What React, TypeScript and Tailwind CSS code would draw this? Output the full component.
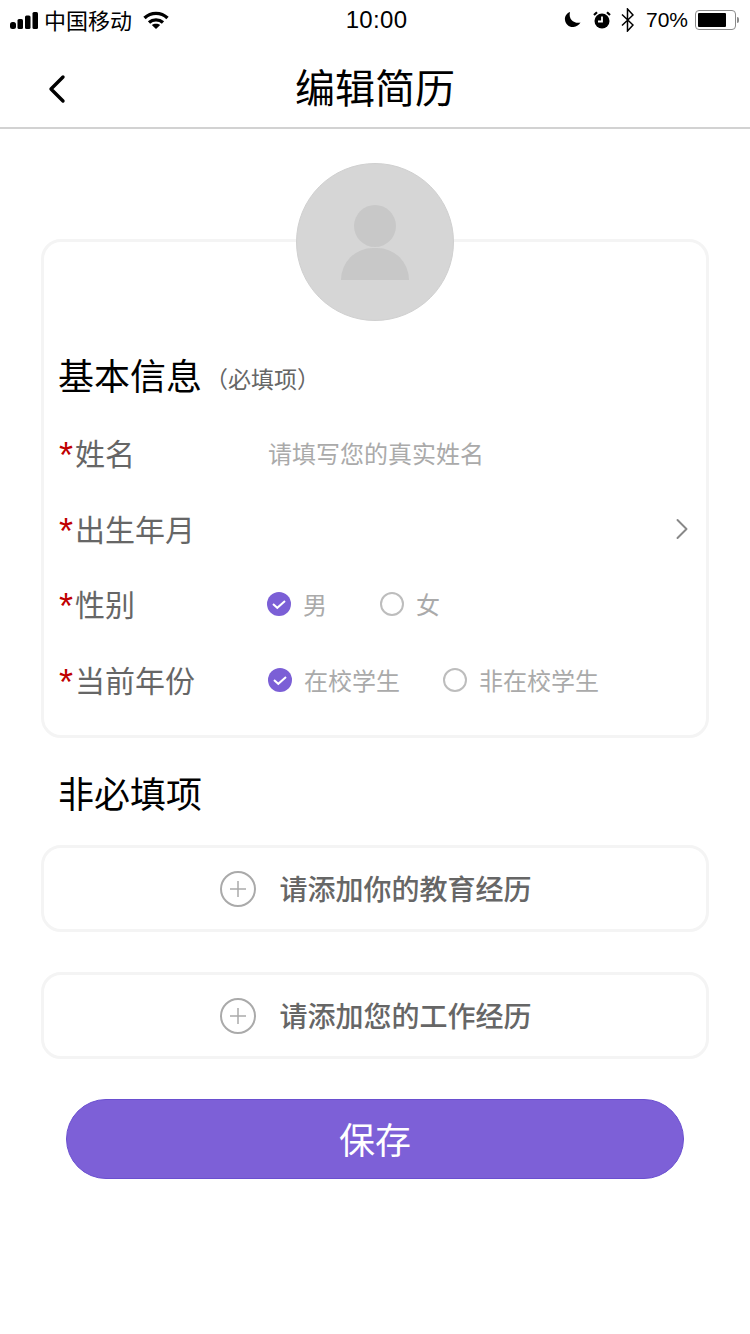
import { ChevronLeft, ChevronRight } from "lucide-react";

const font = "font-['Noto_Sans_CJK_SC','Noto_Sans',sans-serif]";

function SignalBars() {
  return (
    <svg width="28" height="17" viewBox="0 0 28 17" fill="#000">
      <rect x="0" y="10" width="6" height="7" rx="2.500" />
      <rect x="7.500" y="7" width="5.500" height="10" rx="1.500" />
      <rect x="15" y="3.500" width="5.500" height="13.500" rx="1.500" />
      <rect x="22.500" y="0" width="5.500" height="17" rx="1.500" />
    </svg>
  );
}

function Wifi() {
  return (
    <svg width="26" height="18" viewBox="0 0 26 18" fill="none" stroke="#000" strokeWidth="3.400">
      <path d="M1.500 7C8 0.800 18 0.800 24.500 7" />
      <path d="M6 11.500C10 8 16 8 20 11.500" />
      <path d="M13 18L8.800 14C11 12.300 15 12.300 17.200 14Z" fill="#000" stroke="none" />
    </svg>
  );
}

function Moon() {
  return (
    <svg width="18" height="18" viewBox="0 0 18 18" fill="#000">
      <path d="M6 1C2.500 2.300 0.500 5.500 1 9C1.500 13.500 5.500 16.500 9.500 16C12.500 15.700 15 14 16.500 11.500C11 13 4 9 6 1Z" />
    </svg>
  );
}

function Alarm() {
  return (
    <svg width="18" height="18" viewBox="0 0 18 18">
      <circle cx="9" cy="10" r="7.500" fill="#000" />
      <path d="M9 5.500V10.500H5" fill="none" stroke="#fff" strokeWidth="1.800" />
      <path d="M1 4L4 1.200M17 4L14 1.200" stroke="#000" strokeWidth="2.200" />
    </svg>
  );
}

function Bluetooth() {
  return (
    <svg width="13" height="24" viewBox="0 0 13 24" fill="none" stroke="#000" strokeWidth="1.500">
      <path d="M1 6.500L12 17L6.500 23V1L12 7L1 17.500" />
    </svg>
  );
}

function Battery() {
  return (
    <div className="flex items-center gap-px">
      <div className="flex h-[20px] w-[41px] items-center rounded-[4px] border border-[#8a8a8a] p-[2px]">
        <div className="h-full w-[28px] rounded-[1px] bg-black" />
      </div>
      <div className="h-[6px] w-[2px] rounded-r-full bg-[#8a8a8a]" />
    </div>
  );
}

function StatusBar() {
  return (
    <div className="flex h-[40px] items-center justify-between pl-[10px] pr-[11px]">
      <div className="flex w-[250px] items-center">
        <SignalBars />
        <span className="ml-[6px] -translate-y-px text-[22px] leading-none text-black">中国移动</span>
        <span className="ml-[11px] flex"><Wifi /></span>
      </div>
      <span className="translate-x-[2px] text-[24px] leading-none tracking-[0.3px] text-black font-['Liberation_Sans',sans-serif]">10:00</span>
      <div className="flex w-[250px] items-center justify-end">
        <Moon />
        <span className="ml-[11px] flex"><Alarm /></span>
        <span className="ml-[10px] flex"><Bluetooth /></span>
        <span className="ml-[12px] -translate-y-px text-[21px] leading-none text-black font-['Liberation_Sans',sans-serif]">70%</span>
        <span className="ml-[7px] flex"><Battery /></span>
      </div>
    </div>
  );
}

function Label({ text }: { text: string }) {
  return (
    <div className="flex w-[209px] shrink-0 items-center text-[30px] leading-none text-[#666]">
      <span className="w-[17px] translate-x-[1px] translate-y-[3px] text-[36px] font-normal leading-none text-[#c00000] font-['Liberation_Sans',sans-serif]">*</span>
      <span className="-translate-y-px">{text}</span>
    </div>
  );
}

function Radio({ text, checked, gap }: { text: string; checked?: boolean; gap?: string }) {
  return (
    <div className={`flex items-center ${gap ?? ""}`}>
      {checked ? (
        <svg width="24" height="24" viewBox="0 0 24 24">
          <circle cx="12" cy="12" r="12" fill="#7b5fd6" />
          <path d="M6 12L10.300 15.800L18 9" fill="none" stroke="#fff" strokeWidth="2" />
        </svg>
      ) : (
        <div className="h-[24px] w-[24px] rounded-full border-2 border-[#bdbdbd]" />
      )}
      <span className="ml-[12px] text-[24px] leading-none text-[#aaa]">{text}</span>
    </div>
  );
}

function AddRow({ text }: { text: string }) {
  return (
    <div className="flex h-[87px] items-center justify-center rounded-[20px] border-[3px] border-[#f4f4f4] bg-white pl-[2px]">
      <svg width="36" height="36" viewBox="0 0 36 36" fill="none" stroke="#aaa">
        <circle cx="18" cy="18" r="17" strokeWidth="2" />
        <path d="M18 10V26M10 18H26" strokeWidth="1.500" />
      </svg>
      <span className="ml-[23px] -translate-y-px text-[28px] font-medium leading-none text-[#666]">{text}</span>
    </div>
  );
}

export default function App() {
  return (
    <div className={`${font} min-h-[1334px] bg-white`}>
      <StatusBar />
      <header className="relative flex h-[89px] items-center justify-center border-b-2 border-[#d2d2d2] pt-[4px]">
        <ChevronLeft className="absolute left-[33px] top-[25px]" size={48} strokeWidth={1.700} color="#000" />
        <h1 className="text-[40px] font-normal leading-none text-black">编辑简历</h1>
      </header>

      <main className="px-[41px]">
        <div className="relative z-10 mb-[-82px] mt-[34px] flex justify-center">
          <div className="flex h-[158px] w-[158px] flex-col items-center rounded-full border border-[#d0d0d0] bg-[#d6d6d6] pt-[41px]">
            <div className="h-[42px] w-[42px] rounded-full bg-[#c8c8c8]" />
            <div className="mt-[1px] h-[32px] w-[68px] rounded-t-full bg-[#c8c8c8]" />
          </div>
        </div>

        <section className="h-[499px] rounded-[20px] border-[3px] border-[#f4f4f4] bg-white pl-[14px] pr-[16px] pt-[110px]">
          <div className="flex h-[44px] items-center">
            <h2 className="text-[36px] font-normal leading-none text-black">基本信息</h2>
            <span className="ml-[3px] mt-[8px] text-[23px] leading-none text-[#666]">（必填项）</span>
          </div>
          <div className="mt-[19px] flex h-[76px] items-center">
            <Label text="姓名" />
            <span className="ml-px text-[24px] leading-none text-[#aaa]">请填写您的真实姓名</span>
          </div>
          <div className="flex h-[75px] items-center justify-between">
            <Label text="出生年月" />
            <ChevronRight size={36} strokeWidth={1.300} color="#888" className="-mr-[10px]" />
          </div>
          <div className="flex h-[76px] items-center">
            <Label text="性别" />
            <Radio text="男" checked gap="mr-[53px]" />
            <Radio text="女" />
          </div>
          <div className="flex h-[76px] items-center">
            <Label text="当前年份" />
            <Radio text="在校学生" checked gap="ml-px mr-[43px]" />
            <Radio text="非在校学生" />
          </div>
        </section>

        <h2 className="ml-[17px] mt-[32px] text-[36px] font-normal leading-[44px] text-black">非必填项</h2>

        <div className="mt-[31px] flex flex-col gap-[40px]">
          <AddRow text="请添加你的教育经历" />
          <AddRow text="请添加您的工作经历" />
        </div>

        <button
          type="button"
          className="mx-[25px] mt-[40px] flex h-[80px] w-[618px] items-center justify-center rounded-full border border-[#6a4fd0] bg-[#7d60d7] pb-[2px] text-[36px] leading-none text-white"
        >
          保存
        </button>
      </main>
    </div>
  );
}
